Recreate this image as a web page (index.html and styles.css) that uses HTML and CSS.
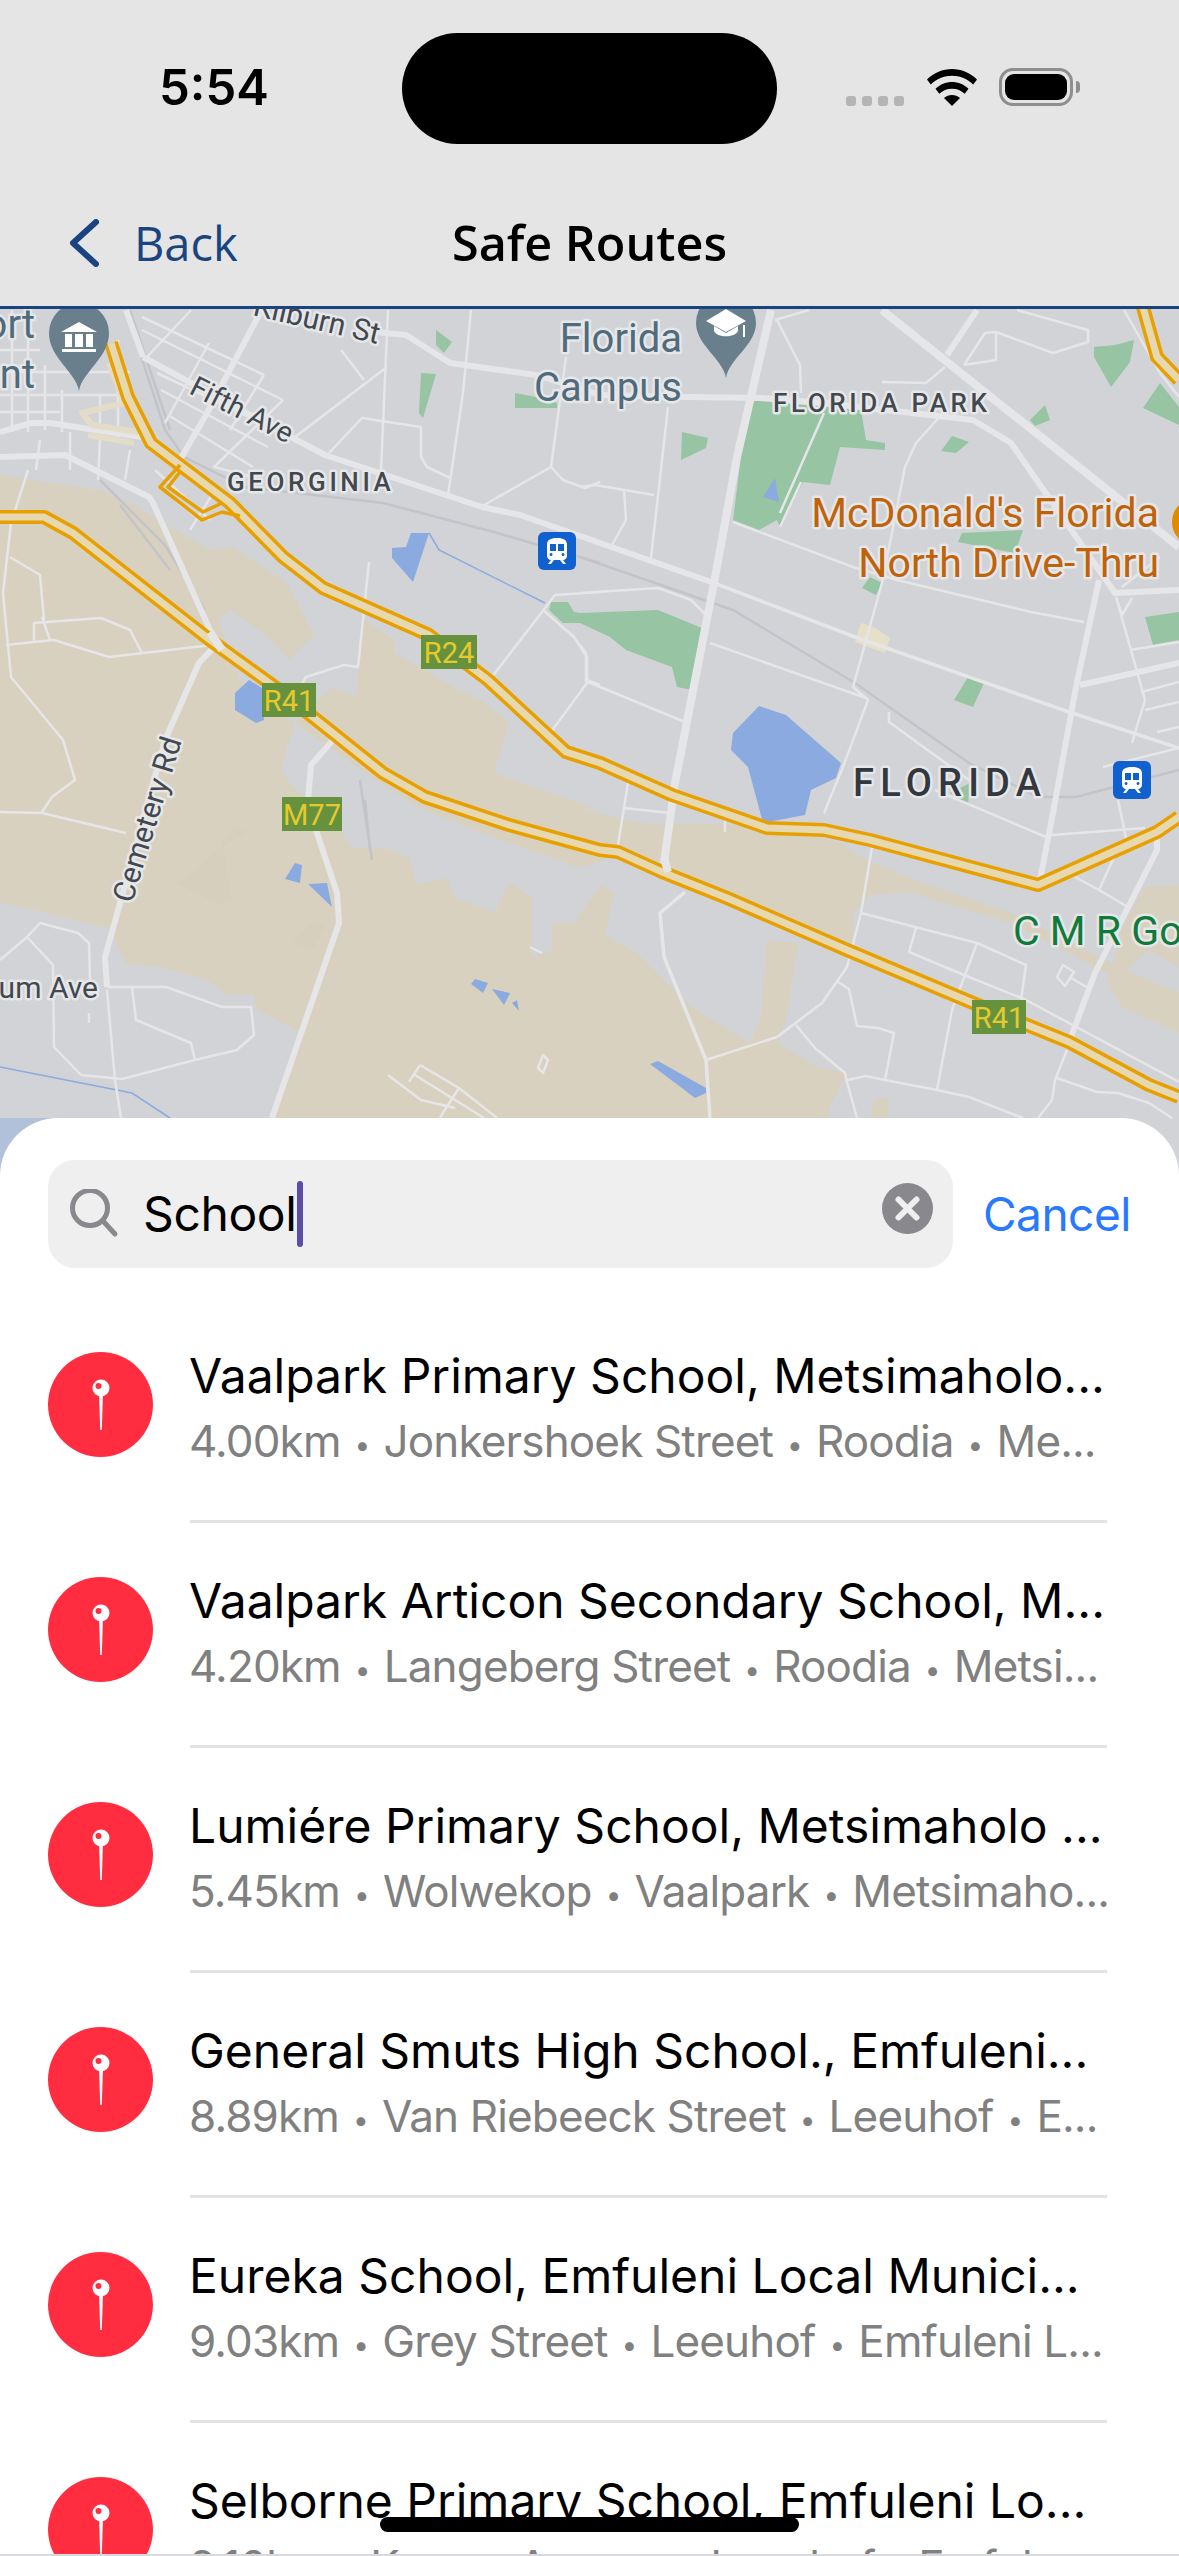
FILE: index.html
```html
<!DOCTYPE html>
<html lang="en">
<head>
<meta charset="utf-8">
<title>Safe Routes</title>
<link rel="stylesheet" href="styles.css">
</head>
<body>
<div class="page">
  <header class="header">
    <div class="status">
      <span class="time">5:54</span>
      <div class="island"></div>
      <div class="status-icons">
        <div class="signal"><i></i><i></i><i></i><i></i></div>
        <svg class="wifi" width="50" height="37" viewBox="0 0 50 37"><path d="M25 0C15.500 0 7 3.700 0 10.500L3.800 15.500C9.500 10 17 6.800 25 6.800S40.500 10 46.200 15.500L50 10.500C43 3.700 34.500 0 25 0Z"/><path d="M25 13C18.500 13 13 15.500 8.500 19.800L12.300 24.700C15.600 21.600 20 19.700 25 19.700S34.400 21.600 37.700 24.700L41.500 19.800C37 15.500 31.500 13 25 13Z"/><path d="M25 26C22 26 19.300 27 17 29L25 37L33 29C30.700 27 28 26 25 26Z"/></svg>
        <div class="battery"><div class="battery-fill"></div></div>
        <div class="battery-nub"></div>
      </div>
    </div>
    <nav class="nav">
      <a class="back">
        <svg class="chevron" width="30" height="48" viewBox="0 0 30 48"><path d="M27 3L4 24L27 45"/></svg>
        <span>Back</span>
      </a>
      <h1 class="title">Safe Routes</h1>
    </nav>
  </header>

  <div class="map">
    <svg class="map-svg" width="1179" height="869" viewBox="0 309 1179 869">
      <rect class="m-bg" x="0" y="309" width="1179" height="869"/>
      <rect class="m-corner" x="0" y="1118" width="70" height="60"/>
      <!-- land -->
      <path class="m-tan" d="M0 475L111 492 210 550 233 547 287 583 314 635 289 660 268 637 230 610 218 620 240 680 295 723 281 767 287 780 340 830 352 848 386 848 409 858 417 885 447 878 455 898 495 912 509 882 532 897 532 957 551 952 553 923 574 923 601 885 614 893 605 935 637 953 691 1007 750 1043 761 1017 767 940 798 943 786 1020 778 1043 817 1067 847 1073 828 1110 840 1178 262 1178 272 1118 298 1032 256 1008 254 995 228 995 207 980 161 967 126 963 115 940 107 928 0 902Z"/>
      <path class="m-tan" d="M295 723L318 700 333 687 356 697 364 620 394 640 394 653 459 690 482 700 509 723 494 773 600 810 580 808 637 823 767 825 840 843 866 860 924 883 1011 913 1115 965 1179 985 1179 993 1115 977 1011 923 908 892 870 895 853 913 853 943 798 925 767 915 662 870 618 855 580 868 500 840 425 810 383 785Z"/>
      <path class="m-tan" d="M1145 887L1179 885 1179 1033 1122 1007 1107 980 1115 960 1122 927Z"/>
      <path class="m-tan" d="M859 1178L874 1100 889 1098 885 1178Z"/>
      <path class="m-gray" d="M1125 970L1179 993 1179 968 1150 950Z"/>
      <path class="m-tan-dark" d="M176 883L220 905 232 900 222 842 236 826 248 832 220 848 196 870Z"/>
      <path class="m-tan-dark" d="M292 942L316 920 326 928 312 950Z"/>
      <!-- parks -->
      <path class="m-green" d="M748 400L861 410 866 440 885 443 885 450 840 447 830 485 803 482 780 527 777 520 759 530 733 520Z"/>
      <path class="m-green" d="M682 432L708 438 706 448 681 460Z"/>
      <path class="m-green" d="M580 613L658 610 702 628 693 690 677 687 672 667 626 650 610 637 580 623 563 623 549 610 551 602 568 602 574 612Z"/>
      <path class="m-green" d="M954 700L968 677 984 683 973 707Z"/>
      <path class="m-green" d="M941 451L952 436 969 442 956 453Z"/>
      <path class="m-green" d="M1094 347L1115 345 1134 340 1130 362 1111 387 1094 357Z"/>
      <path class="m-green" d="M1160 383L1179 407 1179 425 1143 408Z"/>
      <path class="m-green" d="M1145 617L1179 612 1179 640 1153 645Z"/>
      <path class="m-green" d="M962 533L1023 530 1015 553 958 542Z"/>
      <path class="m-green" d="M436 330L452 342 444 353 436 345Z"/>
      <path class="m-green" d="M421 373L436 374 423 418 419 413Z"/>
      <path class="m-green" d="M515 393L536 397 557 403 557 408 515 408Z"/>
      <path class="m-green" d="M870 577L882 583 876 595 862 588Z"/>
      <path class="m-green" d="M950 793L970 783 968 805Z"/>
      <path class="m-green" d="M1030 420L1045 405 1050 420 1035 426Z"/>
      <path class="m-cream" d="M861 623L874 627 890 638 885 653 855 642Z"/>
      <!-- water -->
      <path class="m-water" d="M759 706L786 715 841 763 836 778 811 790 805 815 763 823 748 767 731 750 733 733Z"/>
      <path class="m-water" d="M411 533L429 533 413 582 392 558 392 548 406 547Z"/>
      <path class="m-water" d="M249 680L262 688 264 720 256 723 235 710 235 693Z"/>
      <path class="m-water" d="M295 863L302 865 300 883 285 879Z"/>
      <path class="m-water" d="M308 884L327 883 332 907Z"/>
      <path class="m-water" d="M475 979L488 983 483 993 471 984Z"/>
      <path class="m-water" d="M492 989L510 993 504 1005Z"/>
      <path class="m-water" d="M517 1000L519 1011 512 1003Z"/>
      <path class="m-water" d="M658 1061L706 1088 706 1093 695 1098 650 1064Z"/>
      <path class="m-water" d="M775 478L779 502 763 497Z"/>
      <path class="m-river" d="M429 533L439 550 545 603"/>
      <path class="m-river" d="M0 1067L132 1093 170 1118"/>
      <!-- rail -->
      <path class="m-rail" d="M126 310L165 430 184 457 245 487 383 503 494 532 600 563"/>
      <path class="m-rail" d="M580 557L733 610 855 683 969 763 1038 797 1076 797 1179 770"/>
      <path class="m-rail" d="M130 310L170 430M100 480L165 545 205 610M120 505L170 570M360 780L372 860M365 800L370 850"/>
      <!-- thin streets -->
      <path class="m-thin" d="M142 317L264 375M142 330L283 400M157 373L276 430M161 390L268 447M168 415L253 467M147 357L191 310M209 343L165 423M264 375L230 430M283 400L214 467 253 477M295 437L387 367M329 453L362 418 421 427 421 457 427 467 450 478M388 310L381 470M471 310L463 393 448 495M341 350L364 380M484 505L551 467 563 480 585 488 600 482M551 467L566 357"/>
      <path class="m-thin" d="M555 595L600 592M555 595L492 677M543 610L574 637 587 657 587 683 551 732M587 680L600 685M369 562L358 667 344 665 306 677 300 687"/>
      <path class="m-thin" d="M10 557L40 575 44 620M28 470L11 523 3 593 11 677 63 740 75 780 52 797 42 812M0 812L42 813 126 833M6 645L34 642 54 640 109 657 212 645M34 642L34 623 101 618 130 630 142 653M42 617L50 640"/>
      <path class="m-thin" d="M0 960L27 937 40 923 78 933 89 943 90 980M27 937L53 965 54 1047 81 1075 122 1079 195 1060 237 1050 254 1035 251 1007 222 1007 166 987 107 987M132 987L136 1020 191 1043 195 1060M107 990L115 1080 121 1118M89 1013L89 1023"/>
      <path class="m-thin" d="M420 1065L459 1088 497 1118M409 1082L420 1065M415 1075L484 1118M388 1075L421 1100 455 1108M459 1088L446 1108 440 1118M538 1068L543 1055 548 1060 543 1073ZM530 947L542 953"/>
      <path class="m-thin" d="M628 783L618 845M624 808L670 813M725 820L725 832M872 847L861 913 847 967 822 1003 777 1037 706 1060M861 913L977 943 1026 965 1021 1000M916 928L909 952 964 975 1026 1000 1179 1082M977 943L952 1010 937 1090M796 1025L815 1048 845 1073 847 1082 857 1118M847 1080L866 1076 885 1080 937 1090 969 1097 1023 1118M838 982L849 989 857 1026 878 1028 894 1033 885 1080M1067 1050L1055 1080 1052 1100 1038 1118M1057 1078L1097 1092 1118 1093 1149 1103 1172 1118M1071 978L1088 988M1057 977L1063 965 1074 972 1065 986ZM1052 835L1145 828M1075 877L1099 890 1128 907M1099 890L1116 853 1126 838 1118 800"/>
      <path class="m-thin" d="M775 320L809 310M777 320L800 365 801 393M882 382L926 383 945 367M964 365L996 360 996 332 1053 353 1088 342 1088 330 1017 310M964 365L985 333 996 332M943 413L916 443 905 467 882 583 853 687 868 700 843 767 824 813M733 522L853 567 897 580 1031 612 1084 622M824 413L780 513M801 482L780 527M668 407L651 558M580 487L595 485 654 495M624 490L626 520 612 545M580 593L658 588 691 600 706 615M710 643L866 698M889 712L889 722 969 780M588 682L685 722M586 682L586 653 580 645M935 790L1046 837M1116 597L1145 700 1132 743M1116 597L1122 615 1132 598M1130 650L1179 642M1141 692L1179 682M1145 710L1179 702M1157 732L1179 727M1103 767L1179 748M1122 587L1160 557M1124 310L1160 373 1179 397"/>
      <path class="m-thin" d="M12 310V432M28 310V432M45 365V430M62 390V432M100 395V432M118 340V440M0 350H40M0 372H130M0 395H130M0 412H60M40 440L36 470M70 432L70 470M100 440L98 480M130 450L125 480M155 470L210 520M175 500L200 520M190 530L215 490"/>
      <path class="m-thin-wide" d="M685 892L660 913 664 957 706 1060 710 1118M714 583L855 637 1069 712 1179 748"/>
      <!-- main streets -->
      <path class="m-road" d="M375 332L406 335 450 363 536 375 600 395 687 397 763 398 824 403 973 420 1011 443 1115 593 1179 590"/>
      <path class="m-road" d="M143 357L291 437 325 455 482 507 520 515 600 543 714 583"/>
      <path class="m-road" d="M260 313L207 413 180 460"/>
      <path class="m-road" d="M0 457L65 455 149 497 153 503 210 630 216 645 199 663 165 740 119 907 105 957 107 987"/>
      <path class="m-road" d="M0 432L31 423 50 423 142 437"/>
      <path class="m-road m-road-big" d="M771 310L737 457 714 583 675 783 664 863"/>
      <path class="m-road m-road-big" d="M882 310L1179 547"/>
      <path class="m-road" d="M977 310L947 355"/>
      <path class="m-road" d="M333 740L311 765 308 800 316 830 337 893 339 923 272 1118"/>
      <path class="m-road" d="M1099 580L1076 687 1053 813 1040 880"/>
      <path class="m-road" d="M1157 837L1157 850 1095 973 1071 1037"/>
      <path class="m-road" d="M1080 685L1179 663"/>
      <path class="m-road" d="M143 357L126 310"/>
      <path class="m-cream-line" d="M109 363L124 403 82 413 92 425 138 432M88 435L134 443"/>
      <!-- highways -->
      <g class="hw">
        <path class="hw-o" d="M0 517L44 517 73 533 210 640 279 690 383 773 425 797 509 825 600 850 618 852 662 872 727 898 847 950 973 1003 1069 1042 1149 1085 1179 1097"/>
        <path class="hw-i" d="M0 517L44 517 73 533 210 640 279 690 383 773 425 797 509 825 600 850 618 852 662 872 727 898 847 950 973 1003 1069 1042 1149 1085 1179 1097"/>
        <path class="hw-o" d="M111 343L128 397 151 443 230 503 283 557 323 588 429 635 488 680 566 752 600 763 672 795 767 828 824 830 870 840 1038 885 1157 832 1179 817"/>
        <path class="hw-i" d="M111 343L128 397 151 443 230 503 283 557 323 588 429 635 488 680 566 752 600 763 672 795 767 828 824 830 870 840 1038 885 1157 832 1179 817"/>
        <path class="hw-o" d="M1141 300L1157 357 1179 380"/>
        <path class="hw-i" d="M1141 300L1157 357 1179 380"/>
      </g>
      <path class="hw-thin" d="M180 465L160 487 202 520 222 512 240 516M180 472L168 487 203 512 222 503"/>
      <path class="m-road-x" d="M210 632L222 650M664 858L668 872"/>
      <!-- labels -->
      <text class="lbl lbl-poi" x="35" y="338" text-anchor="end">ort</text>
      <text class="lbl lbl-poi" x="35" y="388" text-anchor="end">nt</text>
      <text class="lbl lbl-poi" x="682" y="352" text-anchor="end">Florida</text>
      <text class="lbl lbl-poi" x="682" y="401" text-anchor="end">Campus</text>
      <text class="lbl lbl-area" x="773" y="412">FLORIDA PARK</text>
      <text class="lbl lbl-area" x="227" y="491">GEORGINIA</text>
      <text class="lbl lbl-city" x="853" y="796">FLORIDA</text>
      <text class="lbl lbl-food" x="1159" y="527" text-anchor="end">McDonald's Florida</text>
      <text class="lbl lbl-food" x="1159" y="577" text-anchor="end">North Drive-Thru</text>
      <text class="lbl lbl-park" x="1013" y="945">C M R Gold</text>
      <text class="lbl lbl-street" transform="translate(252 315) rotate(13)">Kilburn St</text>
      <text class="lbl lbl-street lbl-fifth" transform="translate(188 393) rotate(27)">Fifth Ave</text>
      <text class="lbl lbl-street" transform="translate(132 904) rotate(-73)">Cemetery Rd</text>
      <text class="lbl lbl-street" x="98" y="998" text-anchor="end">ium Ave</text>
      <!-- badges -->
      <rect class="badge" x="262" y="683" width="54" height="34"/><text class="badge-t" x="289" y="711">R41</text>
      <rect class="badge" x="421" y="635" width="56" height="34"/><text class="badge-t" x="449" y="663">R24</text>
      <rect class="badge" x="282" y="797" width="60" height="34"/><text class="badge-t" x="312" y="825">M77</text>
      <rect class="badge" x="972" y="1000" width="54" height="34"/><text class="badge-t" x="999" y="1028">R41</text>
      <!-- POI pins -->
      <path class="pin" d="M79 391C76 372 49 358 49 333A30 30 0 0 1 109 333C109 358 82 372 79 391Z"/>
      <path class="pin-g" d="M79 322L97 332H61ZM65 334H72V347H65ZM75 334H83V347H75ZM86 334H93V347H86ZM62 349H96V352H62Z"/>
      <path class="pin" d="M726 378C723 359 696 345 696 323A30 30 0 0 1 756 323C756 345 729 359 726 378Z"/>
      <path class="pin-g" d="M726 309L746 321 726 332 706 321ZM714 331C717 338 735 338 738 331V326L726 333 714 326ZM743 325H745V337H743Z"/>
      <circle class="food" cx="1196" cy="522" r="24"/>
      <!-- stations -->
      <g transform="translate(538 532)">
        <rect class="station" width="38" height="38" rx="6"/>
        <path class="station-g" d="M19 6C12 6 9 8 9 13V24C9 26 11 28 13 28L10 32H13L16 28H22L25 32H28L25 28C27 28 29 26 29 24V13C29 8 26 6 19 6ZM12 12H18V19H12ZM20 12H26V19H20ZM13 24A1.500 1.500 0 1 1 13.100 24ZM25 24A1.500 1.500 0 1 1 25.100 24Z"/>
      </g>
      <g transform="translate(1113 761)">
        <rect class="station" width="38" height="38" rx="6"/>
        <path class="station-g" d="M19 6C12 6 9 8 9 13V24C9 26 11 28 13 28L10 32H13L16 28H22L25 32H28L25 28C27 28 29 26 29 24V13C29 8 26 6 19 6ZM12 12H18V19H12ZM20 12H26V19H20ZM13 24A1.500 1.500 0 1 1 13.100 24ZM25 24A1.500 1.500 0 1 1 25.100 24Z"/>
      </g>
    </svg>
  </div>

  <section class="sheet">
    <div class="search-row">
      <div class="search">
        <svg class="glass" width="50" height="50" viewBox="0 0 50 50"><circle cx="20" cy="19" r="17.500"/><path d="M33 32L45 45"/></svg>
        <span class="query">School</span><span class="caret"></span>
        <svg class="clear" width="51" height="51" viewBox="0 0 51 51"><circle cx="25.500" cy="25.500" r="25.500"/><path d="M16.500 16.500L34.500 34.500M34.500 16.500L16.500 34.500"/></svg>
      </div>
      <span class="cancel">Cancel</span>
    </div>
    <ul class="results">
      <li class="row">
        <span class="dot"><svg width="24" height="54" viewBox="0 0 24 54"><path class="stem" d="M10 14H14L12.800 52H11.200Z"/><circle class="head" cx="12" cy="10" r="8.500"/><circle class="hole" cx="9.500" cy="8" r="3"/></svg></span>
        <div class="row-text"><div class="row-title">Vaalpark Primary School, Metsimaholo...</div><div class="row-sub">4.00km<span class="sep">•</span>Jonkershoek Street<span class="sep">•</span>Roodia<span class="sep">•</span>Me...</div></div>
      </li>
      <li class="row">
        <span class="dot"><svg width="24" height="54" viewBox="0 0 24 54"><path class="stem" d="M10 14H14L12.800 52H11.200Z"/><circle class="head" cx="12" cy="10" r="8.500"/><circle class="hole" cx="9.500" cy="8" r="3"/></svg></span>
        <div class="row-text"><div class="row-title">Vaalpark Articon Secondary School, M...</div><div class="row-sub">4.20km<span class="sep">•</span>Langeberg Street<span class="sep">•</span>Roodia<span class="sep">•</span>Metsi...</div></div>
      </li>
      <li class="row">
        <span class="dot"><svg width="24" height="54" viewBox="0 0 24 54"><path class="stem" d="M10 14H14L12.800 52H11.200Z"/><circle class="head" cx="12" cy="10" r="8.500"/><circle class="hole" cx="9.500" cy="8" r="3"/></svg></span>
        <div class="row-text"><div class="row-title">Lumiére Primary School, Metsimaholo ...</div><div class="row-sub">5.45km<span class="sep">•</span>Wolwekop<span class="sep">•</span>Vaalpark<span class="sep">•</span>Metsimaho...</div></div>
      </li>
      <li class="row">
        <span class="dot"><svg width="24" height="54" viewBox="0 0 24 54"><path class="stem" d="M10 14H14L12.800 52H11.200Z"/><circle class="head" cx="12" cy="10" r="8.500"/><circle class="hole" cx="9.500" cy="8" r="3"/></svg></span>
        <div class="row-text"><div class="row-title">General Smuts High School., Emfuleni...</div><div class="row-sub">8.89km<span class="sep">•</span>Van Riebeeck Street<span class="sep">•</span>Leeuhof<span class="sep">•</span>E...</div></div>
      </li>
      <li class="row">
        <span class="dot"><svg width="24" height="54" viewBox="0 0 24 54"><path class="stem" d="M10 14H14L12.800 52H11.200Z"/><circle class="head" cx="12" cy="10" r="8.500"/><circle class="hole" cx="9.500" cy="8" r="3"/></svg></span>
        <div class="row-text"><div class="row-title">Eureka School, Emfuleni Local Munici...</div><div class="row-sub">9.03km<span class="sep">•</span>Grey Street<span class="sep">•</span>Leeuhof<span class="sep">•</span>Emfuleni L...</div></div>
      </li>
      <li class="row">
        <span class="dot"><svg width="24" height="54" viewBox="0 0 24 54"><path class="stem" d="M10 14H14L12.800 52H11.200Z"/><circle class="head" cx="12" cy="10" r="8.500"/><circle class="hole" cx="9.500" cy="8" r="3"/></svg></span>
        <div class="row-text"><div class="row-title">Selborne Primary School, Emfuleni Lo...</div><div class="row-sub">9.10km<span class="sep">•</span>Kruger Avenue<span class="sep">•</span>Leeuhof<span class="sep">•</span>Emfule...</div></div>
      </li>
    </ul>
  </section>
  <div class="home-bar"></div>
  <div class="edge-line"></div>
</div>
</body>
</html>
```

FILE: styles.css
```css
* { box-sizing: border-box; }
html, body { margin: 0; padding: 0; background: #fff; }
.page { position: relative; width: 1179px; height: 2556px; overflow: hidden; font-family: Inter, "Liberation Sans", sans-serif; }

/* header */
.header { height: 309px; background: #e5e5e5; border-bottom: 3px solid #1a4480; position: relative; z-index: 2; }
.status { height: 170px; display: flex; align-items: flex-start; position: relative; }
.time { margin: 58px 0 0 159px; font-size: 49px; line-height: 60px; font-weight: 600; color: #000; width: 243px; }
.island { margin-top: 33px; width: 375px; height: 111px; border-radius: 56px; background: #000; }
.status-icons { margin: 68px 0 0 69px; display: flex; align-items: flex-end; height: 38px; }
.signal { display: flex; gap: 6px; margin-bottom: 0; }
.signal i { width: 10px; height: 10px; border-radius: 3px; background: #b5b5b5; }
.wifi { margin-left: 23px; fill: #000; display: block; }
.battery { margin-left: 22px; width: 74px; height: 38px; border: 3.5px solid #8e8e8e; border-radius: 14px; padding: 3px; background: #e5e5e5; }
.battery-fill { width: 100%; height: 100%; background: #000; border-radius: 9px; }
.battery-nub { width: 4px; height: 12px; background: #8e8e8e; border-radius: 0 4px 4px 0; margin: 0 0 13px 3px; }

.nav { height: 136px; position: relative; display: flex; align-items: center; justify-content: center; }
.back { position: absolute; left: 69px; top: 48px; display: flex; align-items: center; gap: 35px; color: #1a4480; font-family: "Open Sans", "Noto Sans", sans-serif; font-size: 47px; line-height: 50px; }
.chevron { fill: none; stroke: #1a4480; stroke-width: 6; stroke-linecap: round; stroke-linejoin: round; display: block; }
.title { margin: 8px 0 0 0; font-family: "Open Sans", "Noto Sans", sans-serif; font-size: 48.5px; line-height: 60px; font-weight: 600; color: #000; }

/* map */
.map { height: 869px; }
.map-svg { display: block; }
.m-bg { fill: #d1d3d7; }
.m-corner { fill: #b0c1d9; }
.m-gray { fill: #d1d3d7; }
.m-tan { fill: #d9d1bf; }
.m-tan-dark { fill: #d6cfbd; }
.m-green { fill: #97c4a3; }
.m-cream { fill: #e7e0c8; }
.m-water { fill: #8babe0; }
.m-river { fill: none; stroke: #8babe0; stroke-width: 1.5; }
.m-rail { fill: none; stroke: #c2c4c9; stroke-width: 2.5; }
.m-thin { fill: none; stroke: #e6e6e8; stroke-width: 2.5; stroke-linejoin: round; }
.m-thin-wide { fill: none; stroke: #e6e6e8; stroke-width: 3.5; stroke-linejoin: round; }
.m-road { fill: none; stroke: #e6e6e8; stroke-width: 6; stroke-linejoin: round; }
.m-road-big { stroke-width: 8; }
.m-road-x { fill: none; stroke: #e6e6e8; stroke-width: 8; }
.m-cream-line { fill: none; stroke: #e3dcc8; stroke-width: 6; stroke-linejoin: round; }
.hw-o { fill: none; stroke: #e8a000; stroke-width: 14; stroke-linejoin: round; }
.hw-i { fill: none; stroke: #e6d8b0; stroke-width: 7; stroke-linejoin: round; }
.hw-thin { fill: none; stroke: #e8a000; stroke-width: 3.5; stroke-linejoin: round; }

.lbl { font-family: Roboto, Inter, sans-serif; paint-order: stroke; stroke: #e6e7e9; stroke-width: 5px; stroke-linejoin: round; }
.lbl-poi { font-size: 40px; fill: #4f6b7c; }
.lbl-area { font-size: 26px; font-weight: 500; letter-spacing: 3.6px; fill: #43484f; }
.lbl-city { font-size: 38px; font-weight: 500; letter-spacing: 6.2px; fill: #33383f; }
.lbl-food { font-size: 41px; fill: #c0620a; }
.lbl-park { font-size: 41px; fill: #117a3b; }
.lbl-street { font-size: 30px; fill: #43484f; }
.lbl-fifth { font-size: 28.5px; }
.badge { fill: #66923d; }
.badge-t { font-family: Roboto, Inter, sans-serif; font-size: 29px; fill: #e6c92f; text-anchor: middle; }
.pin { fill: #6a7f8c; }
.pin-g { fill: #fff; }
.food { fill: #e08a00; }
.station { fill: #1160d0; }
.station-g { fill: #fff; fill-rule: evenodd; }

/* sheet */
.sheet { position: relative; margin-top: -60px; height: 1438px; background: #fff; border-radius: 58px 58px 0 0; padding-top: 42px; overflow: hidden; }
.search-row { display: flex; align-items: center; padding-left: 48px; gap: 30px; }
.search { position: relative; width: 905px; height: 108px; border-radius: 27px; background: #efefef; display: flex; align-items: center; padding-left: 22px; }
.glass { fill: none; stroke: #88888d; stroke-width: 5; stroke-linecap: round; display: block; margin-right: 23px; }
.query { font-size: 48px; line-height: 60px; color: #000; letter-spacing: -0.4px; }
.caret { width: 6px; height: 66px; border-radius: 3px; background: #5c4ea5; margin-left: 1px; }
.clear { position: absolute; right: 20px; top: 23px; }
.clear circle { fill: #88888d; }
.clear path { fill: none; stroke: #efefef; stroke-width: 6; stroke-linecap: round; }
.cancel { font-size: 46px; line-height: 60px; letter-spacing: -0.5px; color: #2979ff; }

.results { list-style: none; margin: 30px 0 0; padding: 0 72px 0 48px; }
.row { display: flex; align-items: flex-start; height: 225px; }
.dot { flex: none; margin-top: 54px; width: 105px; height: 105px; border-radius: 50%; background: #ff2d3f; display: flex; align-items: center; justify-content: center; }
.dot svg { display: block; }
.stem, .head { fill: #fff; }
.hole { fill: #ff2d3f; }
.row-text { flex: 1; margin-left: 37px; height: 225px; padding-top: 48px; border-bottom: 3px solid #e3e3e3; white-space: nowrap; overflow: hidden; }
.row-title { font-size: 48px; line-height: 60px; color: #000; text-indent: -1px; }
.row-sub { margin-top: 5px; font-size: 44px; line-height: 60px; letter-spacing: -0.85px; color: #808080; text-indent: -1px; }
.sep { font-size: 28px; margin: 0 14px; vertical-align: 2px; }

.home-bar { position: absolute; left: 380px; top: 2517px; width: 419px; height: 15px; border-radius: 8px; background: #000; }
.edge-line { position: absolute; left: 0; right: 0; bottom: 0; height: 2px; background: #d8dadf; }
```
